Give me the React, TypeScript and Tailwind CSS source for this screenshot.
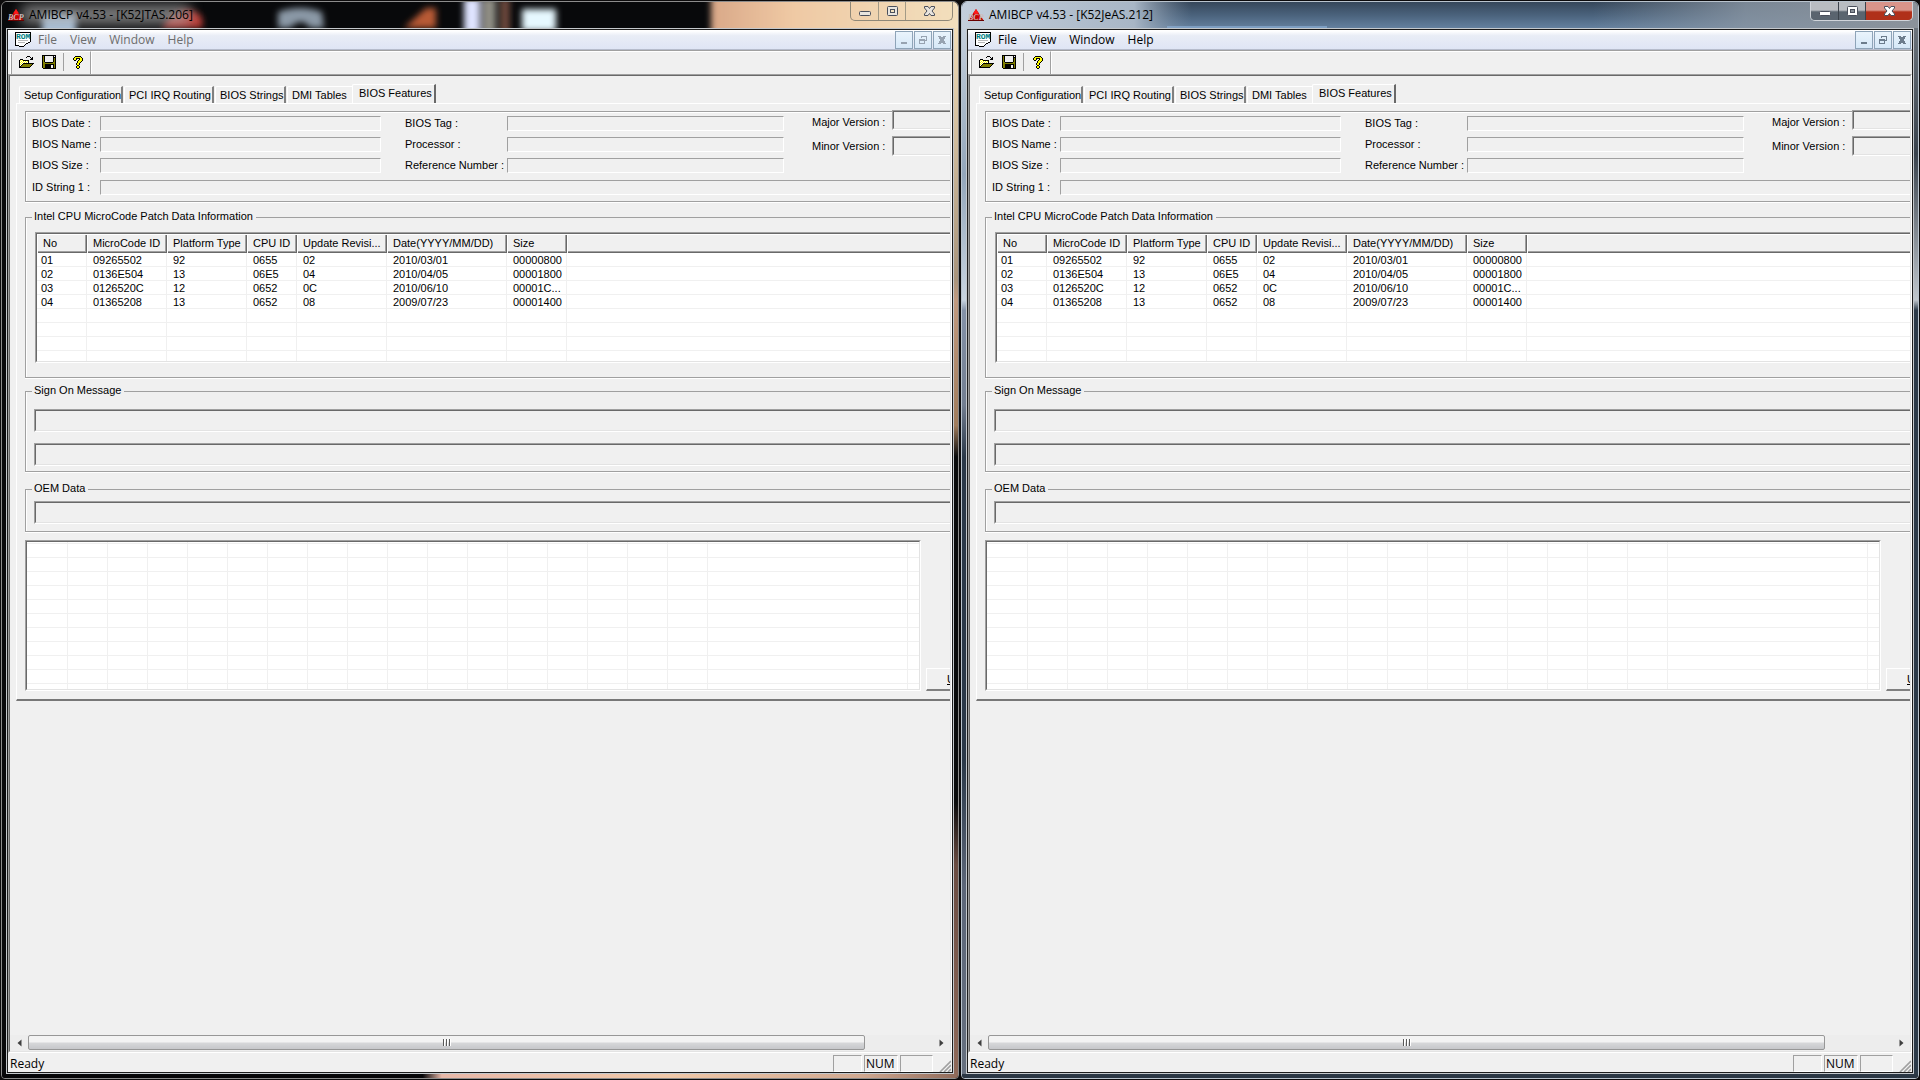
import { ReactNode } from "react"
import clsx from "clsx"

const menus = ["File", "View", "Window", "Help"]

const tabs = [
  { label: "Setup Configuration", width: "w-[104px]" },
  { label: "PCI IRQ Routing", width: "w-[90px]" },
  { label: "BIOS Strings", width: "w-[71px]" },
  { label: "DMI Tables", width: "w-[67px]" },
]

const columns = [
  { label: "No", width: "w-[50px]" },
  { label: "MicroCode ID", width: "w-[80px]" },
  { label: "Platform Type", width: "w-[80px]" },
  { label: "CPU ID", width: "w-[50px]" },
  { label: "Update Revisi...", width: "w-[90px]" },
  { label: "Date(YYYY/MM/DD)", width: "w-[120px]" },
  { label: "Size", width: "w-[60px]" },
  { label: "", width: "" },
]

const patches = [
  ["01", "09265502", "92", "0655", "02", "2010/03/01", "00000800", ""],
  ["02", "0136E504", "13", "06E5", "04", "2010/04/05", "00001800", ""],
  ["03", "0126520C", "12", "0652", "0C", "2010/06/10", "00001C...", ""],
  ["04", "01365208", "13", "0652", "08", "2009/07/23", "00001400", ""],
]

const palette: Record<string, string> = {
  B: "#000000",
  Y: "#ffff00",
  W: "#ffffff",
  O: "#808000",
  G: "#efefef",
}

const openIcon = [
  ".........BBB....",
  "........B...B.B.",
  ".............BB.",
  "..BBB.......BBB.",
  ".BYWYBBBBBB.....",
  ".BWYWYWYWYB.....",
  ".BYWYWYWYWB.....",
  ".BWYWBBBBBBBBBBB",
  ".BYWBOOOOOOOOOB.",
  ".BWBOOOOOOOOOB..",
  ".BBOOOOOOOOOB...",
  ".BBBBBBBBBBB....",
]

const saveIcon = [
  "BBBBBBBBBBBBBB",
  "BOBGGGGGGGGBGB",
  "BOBGGGGGGGGBBB",
  "BOBGGGGGGGGBOB",
  "BOBGGGGGGGGBOB",
  "BOBGGGGGGGGBOB",
  "BOBGGGGGGGGBOB",
  "BOOBBBBBBBBOOB",
  "BOOOOOOOOOOOOB",
  "BOOBBBBBBBBBOB",
  "BOOBBBBBBGGBOB",
  "BOOBBBBBBGGBOB",
  "BOOBBBBBBGGBOB",
  ".BBBBBBBBBBBBB",
]

const helpIcon = [
  "..BBBBBB..",
  ".BYYYYYYB.",
  "BYYBBBBYYB",
  "BYYB..BYYB",
  ".BB..BYYYB",
  "....BYYYB.",
  "....BYYB..",
  "...BYYB...",
  "...BYYB...",
  "....BB....",
  "...BYYB...",
  "...BYYB...",
  "....BB....",
]

function PixelIcon({ rows }: { rows: string[] }) {
  return (
    <svg width={rows[0].length} height={rows.length} shapeRendering="crispEdges" aria-hidden="true">
      {rows.map((row, y) =>
        row.split("").map((c, x) =>
          c === "." ? null : <rect key={`${x}-${y}`} x={x} y={y} width="1" height="1" fill={palette[c]} />
        )
      )}
    </svg>
  )
}

function AppIcon() {
  return (
    <svg width="16" height="16" viewBox="0 0 16 16" aria-hidden="true">
      <path d="M8 2 L16 14 H0 Z" fill="#c80000" />
      <path d="M8 2 L10.5 6 L8 8 L5.5 6 Z" fill="#ff1a1a" />
      <path d="M0 13.5 H16" stroke="#6a0000" strokeWidth="1" />
      <text x="0" y="13" fontSize="8" fontStyle="italic" fontFamily="Liberation Serif, serif" fontWeight="bold" fill="#c9bcbc">
        BCP
      </text>
    </svg>
  )
}

function RomIcon() {
  return (
    <svg width="16" height="16" viewBox="0 0 16 16" aria-hidden="true">
      <path d="M0.5 0.5 H15.5 V9.5 L10.5 12.5 L8.5 14.5 H4.5 L3.5 13.5 H0.5 Z" fill="#fff" stroke="#000" shapeRendering="crispEdges" />
      <path d="M3 8.5 H13 M3 10.5 H10" stroke="#b8b8b8" shapeRendering="crispEdges" />
      <text x="1" y="7" fontSize="8" fontFamily="Liberation Mono, monospace" fontWeight="bold" fill="#008080">
        ROM
      </text>
    </svg>
  )
}

// Desktop seen through the glass of the inactive title bar
function DarkGlass() {
  return (
    <svg className="absolute inset-0 h-full w-full" viewBox="0 0 956 26" preserveAspectRatio="none" aria-hidden="true">
      <defs>
        <filter id="soft" x="-20%" y="-50%" width="140%" height="200%">
          <feGaussianBlur stdDeviation="3" />
        </filter>
        <filter id="glow" x="-20%" y="-100%" width="140%" height="300%">
          <feGaussianBlur stdDeviation="7" />
        </filter>
        <linearGradient id="sand">
          <stop offset="0" stopColor="#d9a888" />
          <stop offset="0.3" stopColor="#efc9a4" />
          <stop offset="1" stopColor="#f3e2c0" />
        </linearGradient>
      </defs>
      <rect width="956" height="26" fill="#08090b" />
      <g filter="url(#soft)">
        <rect x="40" y="12" width="34" height="20" fill="#a9c4e0" />
        <path d="M160 26 Q170 8 186 8 Q204 10 200 26 Z" fill="#b83a34" />
        <path d="M276 26 V10 Q298 2 320 10 L322 26 H308 Q300 14 288 26 Z" fill="#8a98a6" />
        <path d="M402 26 L424 6 H434 V26 Z" fill="#b85a34" />
        <rect x="462" y="-4" width="16" height="36" fill="#dfe4ff" />
        <rect x="480" y="-4" width="14" height="36" fill="#8f8d84" />
        <rect x="498" y="-4" width="10" height="36" fill="#6d4a3c" />
        <rect x="709" y="-10" width="270" height="50" fill="url(#sand)" />
      </g>
      <rect x="520" y="7" width="34" height="22" fill="#e6f8ff" filter="url(#soft)" />
      <rect x="20" y="3" width="168" height="19" fill="#a8a8a8" opacity="0.75" filter="url(#glow)" />
    </svg>
  )
}

function BlueGlass() {
  return (
    <svg className="absolute inset-0 h-full w-full" viewBox="0 0 956 26" preserveAspectRatio="none" aria-hidden="true">
      <defs>
        <linearGradient id="steel" x2="0" y2="1">
          <stop offset="0" stopColor="#36475a" />
          <stop offset="0.5" stopColor="#4a627c" />
          <stop offset="1" stopColor="#64809e" />
        </linearGradient>
        <linearGradient id="sheen">
          <stop offset="0" stopColor="#c3cedb" />
          <stop offset="0.18" stopColor="#a8b6c6" />
          <stop offset="0.24" stopColor="#7e90a4" stopOpacity="0" />
          <stop offset="0.66" stopColor="#8b97a4" stopOpacity="0" />
          <stop offset="0.82" stopColor="#8b97a4" stopOpacity="0.8" />
          <stop offset="1" stopColor="#8b929a" />
        </linearGradient>
      </defs>
      <rect width="956" height="26" fill="url(#steel)" />
      <rect width="956" height="26" fill="url(#sheen)" />
      <rect x="205" y="24" width="160" height="2" fill="#8fb4dc" opacity="0.6" />
    </svg>
  )
}

function CaptionButtons({ active }: { active: boolean }) {
  const ink = active ? "#ffffff" : "#e8e4de"
  return (
    <div
      className={clsx(
        "relative flex h-[19px] w-[103px] shrink-0 overflow-hidden rounded-b-[5px] border border-t-0",
        active ? "border-[#d0d4da]" : "border-[#8f8878]"
      )}
    >
      <button
        aria-label="Minimize"
        className={clsx(
          "flex w-[28px] items-center justify-center border-r",
          active ? "border-[#3c434c] bg-linear-to-b from-[#b9bcc1] from-45% to-[#5a646f] to-55%" : "border-[#a39a86]"
        )}
      >
        <svg width="14" height="14" aria-hidden="true">
          <rect x="1.5" y="7.5" width="11" height="4" rx="1" fill={ink} stroke="#4a4f5c" />
        </svg>
      </button>
      <button
        aria-label="Maximize"
        className={clsx(
          "flex w-[27px] items-center justify-center border-r",
          active ? "border-[#3c434c] bg-linear-to-b from-[#b9bcc1] from-45% to-[#5a646f] to-55%" : "border-[#a39a86]"
        )}
      >
        <svg width="13" height="12" aria-hidden="true">
          <rect x="1.5" y="1.5" width="10" height="9" rx="1" fill={ink} stroke="#4a4f5c" />
          <rect x="4.5" y="4.5" width="4" height="3" fill={active ? "#8b929a" : "#f3e2c0"} stroke="#4a4f5c" />
        </svg>
      </button>
      <button
        aria-label="Close"
        className={clsx(
          "flex flex-1 items-center justify-center",
          active && "bg-linear-to-b from-[#d9948a] from-45% to-[#b0301a] to-55%"
        )}
      >
        <svg width="13" height="12" aria-hidden="true">
          <path d="M1.5 1.5 H5 L6.5 3.5 L8 1.5 H11.5 V3 L9 6 L11.5 9 V10.5 H8 L6.5 8.5 L5 10.5 H1.5 V9 L4 6 L1.5 3 Z" fill={ink} stroke="#4a4f5c" />
        </svg>
      </button>
    </div>
  )
}

function MdiButton({ label, children }: { label: string; children: ReactNode }) {
  return (
    <button
      aria-label={label}
      className="flex size-[18px] items-center justify-center border border-[#8ea4b8] bg-linear-to-b from-[#eaf4fc] to-[#d6e8f8]"
    >
      <svg width="10" height="10" shapeRendering="crispEdges" aria-hidden="true">
        {children}
      </svg>
    </button>
  )
}

function MenuBar({ active }: { active: boolean }) {
  const ink = active ? "#6c7c8c" : "#97a3b1"
  return (
    <div className="flex h-5 items-center border-b border-[#b6bccc] bg-linear-to-b from-white from-5% via-[#e9edf6] via-30% to-[#dfe5f5]">
      <div className="ml-[7px]">
        <RomIcon />
      </div>
      <nav className={clsx("flex grow gap-px pl-px font-['Open_Sans',sans-serif] text-xs", active ? "text-black" : "text-[#6d6d6d]")}>
        {menus.map((m) => (
          <button key={m} className="px-[6px]">
            {m}
          </button>
        ))}
      </nav>
      <div className="mr-px flex gap-px">
        <MdiButton label="Minimize document">
          <path d="M2 7 H8 V9 H2 Z" fill={ink} />
        </MdiButton>
        <MdiButton label="Restore document">
          <path d="M3.5 3 V1.5 H8.5 V5.5 H7 M3 1.5 H9" fill="none" stroke={ink} />
          <path d="M1 4 H7 V9 H1 Z M2 6 V8 H6 V6 Z" fill={ink} fillRule="evenodd" />
        </MdiButton>
        <MdiButton label="Close document">
          <path d="M1 1 H4 L5 3 L6 1 H9 L7 5 L9 9 H6 L5 7 L4 9 H1 L3 5 Z" fill={ink} />
        </MdiButton>
      </div>
    </div>
  )
}

function Toolbar() {
  return (
    <div className="flex h-[24px] items-stretch border-t border-[#a0a0a0] bg-[#f0f0f0]">
      <div className="ml-[2px] flex w-[81px] items-center border-x border-t border-t-white border-r-[#a0a0a0] border-l-white pb-[2px]">
        <span className="-mb-[2px] self-stretch border-l border-[#a0a0a0]" />
        <button aria-label="Open" className="ml-[6px]">
          <PixelIcon rows={openIcon} />
        </button>
        <button aria-label="Save" className="ml-[8px]">
          <PixelIcon rows={saveIcon} />
        </button>
        <span className="ml-[7px] h-[18px] w-px bg-[#a0a0a0]" />
        <button aria-label="Help" className="ml-[9px]">
          <PixelIcon rows={helpIcon} />
        </button>
      </div>
      <div className="grow border-t border-l border-white" />
    </div>
  )
}

function Field({ id, label, labelWidth, width }: { id: string; label: string; labelWidth: string; width: string }) {
  return (
    <div className="flex items-center">
      <label htmlFor={id} className={clsx("shrink-0 whitespace-nowrap", labelWidth)}>
        {label}
      </label>
      <input
        id={id}
        readOnly
        className={clsx(
          "h-[15px] shrink-0 border border-t-[#a0a0a0] border-r-white border-b-white border-l-[#a0a0a0] bg-[#f0f0f0]",
          width
        )}
      />
    </div>
  )
}

function SunkenInput({ id, label, className }: { id: string; label?: string; className: string }) {
  return (
    <div className={clsx("border border-t-[#a0a0a0] border-r-white border-b-white border-l-[#a0a0a0]", className)}>
      <input
        id={id}
        aria-label={label}
        readOnly
        className="block h-full w-full border border-t-[#696969] border-r-[#e3e3e3] border-b-[#e3e3e3] border-l-[#696969] bg-[#f0f0f0]"
      />
    </div>
  )
}

function Group({ title, className, children }: { title: string; className: string; children: ReactNode }) {
  return (
    <fieldset className={clsx("w-[1000px] border border-[#a0a0a0] shadow-[inset_1px_0_0_white,0_1px_0_white]", className)}>
      <legend className="ml-[6px] h-[14px] pr-[3px] pl-[2px] leading-[13px]">{title}</legend>
      {children}
    </fieldset>
  )
}

function BiosInfo({ id }: { id: string }) {
  return (
    <div className="h-[91px] w-[1000px] border border-[#a0a0a0] pt-[4px] pl-[6px] shadow-[inset_1px_1px_0_white,0_1px_0_white]">
      <div className="flex h-[64px]">
        <div className="flex flex-col gap-[6px]">
          <Field id={`${id}-date`} label="BIOS Date :" labelWidth="w-[68px]" width="w-[281px]" />
          <Field id={`${id}-name`} label="BIOS Name :" labelWidth="w-[68px]" width="w-[281px]" />
          <Field id={`${id}-size`} label="BIOS Size :" labelWidth="w-[68px]" width="w-[281px]" />
        </div>
        <div className="ml-[24px] flex flex-col gap-[6px]">
          <Field id={`${id}-tag`} label="BIOS Tag :" labelWidth="w-[102px]" width="w-[277px]" />
          <Field id={`${id}-cpu`} label="Processor :" labelWidth="w-[102px]" width="w-[277px]" />
          <Field id={`${id}-ref`} label="Reference Number :" labelWidth="w-[102px]" width="w-[277px]" />
        </div>
        <div className="-mt-[6px] ml-[28px] flex flex-col gap-[6px]">
          <div className="flex items-end">
            <label htmlFor={`${id}-major`} className="w-[80px] whitespace-nowrap">
              Major Version :
            </label>
            <SunkenInput id={`${id}-major`} className="h-5 w-[120px]" />
          </div>
          <div className="flex items-center">
            <label htmlFor={`${id}-minor`} className="w-[80px] whitespace-nowrap">
              Minor Version :
            </label>
            <SunkenInput id={`${id}-minor`} className="h-5 w-[120px]" />
          </div>
        </div>
      </div>
      <Field id={`${id}-string`} label="ID String 1 :" labelWidth="w-[68px]" width="w-[900px]" />
    </div>
  )
}

function PatchTable() {
  return (
    <div className="ml-[9px] mt-[8px] h-[131px] w-[970px] overflow-hidden border border-t-[#a0a0a0] border-b-white border-l-[#a0a0a0]">
      <div className="h-full overflow-hidden border border-t-[#696969] border-b-[#e3e3e3] border-l-[#696969] bg-white">
        <table className="w-full table-fixed border-collapse text-left">
          <thead>
            <tr className="h-[19px]">
              {columns.map((c, i) => (
                <th
                  key={i}
                  className={clsx(
                    "h-[19px] bg-[#f0f0f0] p-0 pb-px pl-[6px] leading-[14px] font-normal whitespace-nowrap shadow-[inset_1px_1px_0_white,inset_-1px_-1px_0_#696969,inset_-2px_-2px_0_#a0a0a0]",
                    c.width
                  )}
                >
                  {c.label}
                </th>
              ))}
            </tr>
          </thead>
          <tbody>
            {patches.map((row) => (
              <tr key={row[0]} className="h-[14px]">
                {row.map((cell, i) => (
                  <td
                    key={i}
                    className="h-[14px] p-0 pl-[6px] leading-[14px] whitespace-nowrap shadow-[inset_-1px_-1px_0_#f0f0f0] first:pl-[4px]"
                  >
                    {cell}
                  </td>
                ))}
              </tr>
            ))}
            {[0, 1, 2, 3].map((r) => (
              <tr key={r} className="h-[14px]">
                {columns.map((_, i) => (
                  <td key={i} className="h-[14px] p-0 shadow-[inset_-1px_-1px_0_#f0f0f0]" />
                ))}
              </tr>
            ))}
          </tbody>
        </table>
      </div>
    </div>
  )
}

function HexGrid() {
  return (
    <div className="h-[151px] w-[896px] shrink-0 border border-t-[#a0a0a0] border-r-white border-b-white border-l-[#a0a0a0]">
      <div className="flex h-full border border-t-[#696969] border-r-[#e3e3e3] border-b-[#e3e3e3] border-l-[#696969] bg-white bg-[repeating-linear-gradient(to_bottom,transparent_0_13px,#f0f0f0_13px_14px)] bg-position-[0_-12px] bg-size-[100%_200px]">
        <div className="w-[41px] border-r border-[#f0f0f0]" />
        {Array.from({ length: 16 }, (_, i) => (
          <div key={i} className="w-10 border-r border-[#f0f0f0]" />
        ))}
        <div className="w-[200px] border-r border-[#f0f0f0]" />
      </div>
    </div>
  )
}

function ScrollBar() {
  return (
    <div className="flex h-[16px] shrink-0 items-center bg-[#ededed] pb-px">
      <button aria-label="Scroll left" className="flex w-[18px] justify-center">
        <svg width="5" height="8" aria-hidden="true">
          <path d="M4.5 0.5 V7.5 L0.5 4 Z" fill="#404040" />
        </svg>
      </button>
      <div className="flex grow">
        <div className="flex h-[15px] w-25/27 items-center justify-center gap-px rounded-xs border border-[#979797] bg-linear-to-b from-[#f3f3f3] from-45% via-[#d6d7d9] via-55% to-[#c6c7ca]">
          {[0, 1, 2].map((i) => (
            <span key={i} className="h-[7px] w-[2px] border-r border-white bg-[#5a5a5a]" />
          ))}
        </div>
      </div>
      <button aria-label="Scroll right" className="flex w-[18px] justify-center">
        <svg width="5" height="8" aria-hidden="true">
          <path d="M0.5 0.5 V7.5 L4.5 4 Z" fill="#404040" />
        </svg>
      </button>
    </div>
  )
}

function StatusBar() {
  const pane = "h-[17px] border border-t-[#a0a0a0] border-r-white border-b-white border-l-[#a0a0a0]"
  return (
    <div className="flex h-[19px] shrink-0 items-end bg-[#f0f0f0] font-['Open_Sans',sans-serif] text-xs">
      <span className="grow pl-[2px] leading-[17px]">Ready</span>
      <div className="flex gap-[2px]">
        <div className={clsx(pane, "w-[29px]")} />
        <div className={clsx(pane, "w-[34px] pl-px leading-[15px]")}>NUM</div>
        <div className={clsx(pane, "w-[33px]")} />
      </div>
      <svg className="mr-px ml-[6px]" width="12" height="12" aria-hidden="true">
        <path d="M1 12 L12 1 M5 12 L12 5 M9 12 L12 9" stroke="#a0a0a0" strokeWidth="1.6" />
      </svg>
    </div>
  )
}

function Features({ id }: { id: string }) {
  return (
    <div className="pt-[8px] pl-[6px]">
      <div className="flex items-end pl-[3px]">
        {tabs.map((t) => (
          <button
            key={t.label}
            className={clsx(
              "mr-px h-[17px] rounded-tl-xs border-t border-r-2 border-l border-t-white border-r-[#808080] border-l-white pl-[4px] text-left leading-[15px] whitespace-nowrap",
              t.width
            )}
          >
            {t.label}
          </button>
        ))}
        {/* the selected tab covers the right edge of its neighbour */}
        <button className="-ml-[3px] h-[19px] w-[84px] rounded-tl-xs border-t border-r-2 border-l border-t-white border-r-[#696969] border-l-white bg-[#f0f0f0] pb-[2px] pl-[6px] text-left leading-[15px] whitespace-nowrap">
          BIOS Features
        </button>
      </div>
      <div className="w-[1100px] border-t border-b-2 border-l border-t-white border-b-[#777777] border-l-white pt-[7px] pb-[8px] pl-[8px]">
        <BiosInfo id={id} />
        <Group title="Intel CPU MicroCode Patch Data Information" className="mt-[8px] h-[168px]">
          <PatchTable />
        </Group>
        <Group title="Sign On Message" className="mt-[6px] h-[88px]">
          <div className="mt-[11px] ml-[8px] flex flex-col gap-[11px]">
            <SunkenInput id={`${id}-sign1`} label="Sign on message line 1" className="h-[23px]" />
            <SunkenInput id={`${id}-sign2`} label="Sign on message line 2" className="h-[23px]" />
          </div>
        </Group>
        <Group title="OEM Data" className="mt-[10px] h-[50px]">
          <SunkenInput id={`${id}-oem`} label="OEM Data" className="mt-[5px] ml-[8px] h-[23px]" />
        </Group>
        <div className="mt-[8px] flex items-end">
          <HexGrid />
          <button className="ml-[5px] h-[23px] w-[90px] border-t border-b-2 border-l border-t-white border-b-[#808080] border-l-white pl-[20px] text-left">
            <span className="underline">U</span>pdate
          </button>
        </div>
      </div>
    </div>
  )
}

type WindowProps = {
  id: string
  file: string
  active: boolean
  left: string
  right: string
  bottom: string
}

function AppWindow({ id, file, active, left, right, bottom }: WindowProps) {
  return (
    <section
      className={clsx(
        "flex min-w-0 flex-1 flex-col overflow-hidden rounded-t-md rounded-b-sm border",
        active ? "border-[#b9c3cd]" : "border-[#8c8c8c]"
      )}
    >
      <header className="relative flex h-[26px] shrink-0 items-start justify-between pr-[5px]">
        {active ? <BlueGlass /> : <DarkGlass />}
        <div className="relative flex h-[26px] items-center pl-[6px]">
          <AppIcon />
          <h1 className="pl-[5px] font-['Open_Sans',sans-serif] text-xs text-black">AMIBCP v4.53 - [{file}]</h1>
        </div>
        <CaptionButtons active={active} />
      </header>
      <div className="flex min-h-0 grow">
        <div className={clsx("w-[4px] shrink-0", left)} />
        <div className="flex min-w-0 grow flex-col border border-[#c4c8cc]">
          <main className="flex min-h-0 min-w-0 grow flex-col border border-[#1c1c1c] bg-[#f0f0f0]">
            <MenuBar active={active} />
            <Toolbar />
            <div className="flex min-h-0 grow flex-col border border-t-[#a0a0a0] border-r-white border-b-white border-l-[#a0a0a0]">
              <div className="flex min-h-0 grow flex-col border border-t-[#696969] border-r-[#e3e3e3] border-b-[#e3e3e3] border-l-[#696969]">
                <div className="min-h-0 grow overflow-hidden font-['Liberation_Sans',sans-serif] text-[11px] leading-[15px]">
                  <Features id={id} />
                </div>
                <ScrollBar />
              </div>
            </div>
            <StatusBar />
          </main>
        </div>
        <div className={clsx("w-[4px] shrink-0", right)} />
      </div>
      <div className={clsx("h-[4px] shrink-0", bottom)} />
    </section>
  )
}

export default function App() {
  return (
    <div className="flex h-screen gap-[2px] overflow-hidden bg-[#0c0b0c] p-px text-black">
      <AppWindow
        id="left"
        file="K52JTAS.206"
        active={false}
        left="bg-[#08080a]"
        right="bg-[linear-gradient(to_bottom,#f0dcb8,#a8947c_24%,#c09a80_26%,#a07c5c_38%,#0a0b0c_41%,#0a0b0c_74%,#6a4c42_80%,#8f6a5a)]"
        bottom="bg-[linear-gradient(to_right,#060608_44%,#e8b8a8_46%,#f0c8a8_70%,#d0a890_90%,#8f6a5a)]"
      />
      <AppWindow
        id="right"
        file="K52JeAS.212"
        active
        left="bg-[linear-gradient(to_bottom,#c3cedb,#93a6ba_14%,#c8d4e0_26%,#8492a8_27%,#727e90_36%,#2a3848_41%,#2a3848_70%,#5c6678_82%,#66707f)]"
        right="bg-[linear-gradient(to_bottom,#6c747c,#39424c_12%,#c0c6cc_26%,#2c3a48_27%,#2c3a48)]"
        bottom="bg-[#2b3744]"
      />
    </div>
  )
}
